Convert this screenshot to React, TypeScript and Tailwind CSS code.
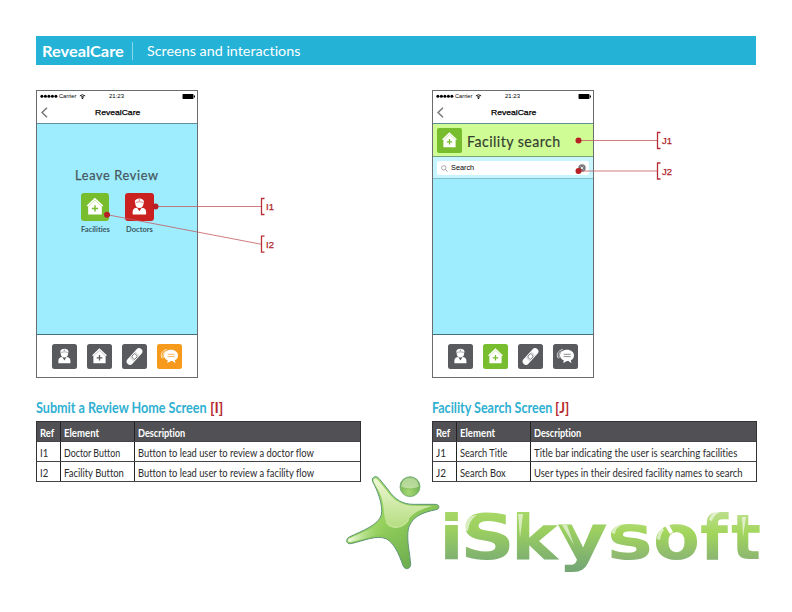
import React, { useLayoutEffect, useRef, useState } from "react";
import type { ReactNode } from "react";

const LATO = "font-[Lato,'Open_Sans',sans-serif] [font-variant-ligatures:none]";
const HELV = "font-['Liberation_Sans',Arial,sans-serif]";

/* A single line of text condensed or expanded to a given width. */
function Fit({ w, className = "", children }: { w: number; className?: string; children: ReactNode }) {
  const ref = useRef<HTMLSpanElement>(null);
  const [scale, setScale] = useState(1);
  useLayoutEffect(() => {
    if (ref.current) setScale(w / ref.current.offsetWidth);
  }, [w]);
  return (
    <span className={`block whitespace-nowrap ${className}`} style={{ width: w }}>
      <span ref={ref} className="inline-block origin-left" style={{ transform: `scaleX(${scale})` }}>
        {children}
      </span>
    </span>
  );
}

type IconName = "doctor" | "house" | "bandage" | "chat";

function Glyph({ name }: { name: IconName }) {
  return (
    <svg viewBox="0 0 25 25" className="h-full w-full" fill="white">
      {name === "doctor" && (
        <g>
          <path d="M8.300 7.600c0-1.600 1.800-2.800 4.100-2.800s4.100 1.200 4.100 2.800l-.4 1.800c0 2.400-1.600 4.100-3.700 4.100S8.700 11.800 8.700 9.400z" />
          <path d="M6.400 19.300v-2.500c0-2.400 1.700-3.700 3.900-3.700l2.100 3.300 2.100-3.300c2.200 0 3.900 1.300 3.900 3.700v2.500z" />
          <path d="M9 8.400q3.400-1.200 6.800 0" fill="none" stroke="currentColor" strokeWidth=".5" />
          <path d="M12.400 5.600v1.400M11.700 6.300h1.400" fill="none" stroke="currentColor" strokeWidth=".4" />
        </g>
      )}
      {name === "house" && (
        <g>
          <path d="M12.400 4.300 19.900 11.200l-.9.9-.4-.3v7.500H6.400v-7.500l-.4.300-.9-.9z" />
          <path d="M6.600 11.800 12.500 6.400l5.900 5.400" fill="none" stroke="currentColor" strokeWidth=".35" />
          <path d="M12.500 11v5.600M9.700 13.800h5.600" fill="none" stroke="currentColor" strokeWidth="1.300" />
        </g>
      )}
      {name === "bandage" && (
        <g transform="rotate(-48 12.500 12.500)">
          <rect x="2.400" y="9.200" width="20.200" height="6.600" rx="3.300" />
          <rect x="10.100" y="10.400" width="4.800" height="4.200" rx="1.200" fill="none" stroke="currentColor" strokeWidth=".8" />
          <path d="M8.700 9.200v6.600M16.300 9.200v6.600" stroke="currentColor" strokeWidth=".3" />
        </g>
      )}
      {name === "chat" && (
        <g>
          <path d="M10 5.500C5 5.800 3 11 5.200 14.400M9 6.800C6.300 8 5.400 11.500 6.300 14" fill="none" stroke="white" strokeWidth=".7" />
          <path d="M14 5.800c4.100 0 7 2.500 7 5.700 0 2.300-1.200 3.900-3.200 4.800l.7 2.900-3-2.200H14l-3.700 2.100.4-2.900C8.300 15.300 7 13.600 7 11.500c0-3.200 2.900-5.700 7-5.700z" />
          <path d="M10.600 10.300h7M10.600 12.600h7" fill="none" stroke="currentColor" strokeWidth=".7" />
        </g>
      )}
    </svg>
  );
}

function StatusBar() {
  return (
    <div className={`flex h-[10px] items-center pl-[3px] pr-[2px] text-[6px] leading-[10px] text-black ${HELV}`}>
      <svg viewBox="0 0 18 4" className="h-[4px] w-[18px]">
        {[1.900, 5.400, 8.900, 12.400, 15.900].map((x) => (
          <circle key={x} cx={x} cy="2.200" r="1.500" />
        ))}
      </svg>
      <Fit w={17} className="ml-px">Carrier</Fit>
      <svg viewBox="0 0 8 6" className="ml-[3px] h-[5px] w-[7px]" fill="none" stroke="black">
        <path d="M.8 2.300Q4-.5 7.200 2.300M2.200 3.800q1.800-1.600 3.600 0" strokeWidth="1.100" />
        <circle cx="4" cy="5" r=".6" fill="black" />
      </svg>
      <Fit w={15} className="ml-[23px]">21:23</Fit>
      <svg viewBox="0 0 13 5" className="ml-auto h-[5px] w-[13px]">
        <rect x=".5" width="11" height="5" rx=".7" />
        <rect x="12" y="1.500" width="1" height="2" />
      </svg>
    </div>
  );
}

function Phone({ active, color, children }: { active: IconName; color: string; children: ReactNode }) {
  const names: IconName[] = ["doctor", "house", "bandage", "chat"];
  return (
    <div className="flex h-[288px] w-[162px] flex-col border border-[#6a6d70] bg-white">
      <StatusBar />
      <div className={`flex h-[23px] items-center border-b border-[#5d8f9b] pl-[4px] text-[8px] leading-[24px] text-black ${HELV}`}>
        <svg viewBox="0 0 7 11" className="h-[11px] w-[7px]" fill="none" stroke="#777" strokeWidth="1.500">
          <path d="M6 .7 1 5.500 6 10.300" />
        </svg>
        <Fit w={45} className="ml-[47px] mt-px [-webkit-text-stroke:0.25px_black]">RevealCare</Fit>
      </div>
      <div className="flex flex-1 flex-col border-b border-[#44717c] bg-[#9eedff]">{children}</div>
      <div className="flex h-[42px] gap-[10px] pl-[15px] pt-[9px]">
        {names.map((n) => (
          <div key={n} className={`h-[25px] w-[25px] rounded-[2.500px] ${n === active ? color : "bg-[#595a5e] text-[#595a5e]"}`}>
            <Glyph name={n} />
          </div>
        ))}
      </div>
    </div>
  );
}

interface Call { dot: [number, number]; at: [number, number]; label: string }

function Callouts({ items }: { items: Call[] }) {
  return (
    <svg viewBox="0 0 270 287" className="absolute left-0 top-0 h-[287px] w-[270px]">
      {items.map(({ dot, at, label }) => (
        <g key={label}>
          <path d={`M${dot[0]} ${dot[1]}L${at[0]} ${at[1]}`} stroke="#c45a5e" strokeWidth=".8" />
          <circle cx={dot[0]} cy={dot[1]} r="3" fill="#b81f24" />
          <path d={`M${at[0] + 3.500} ${at[1] - 8}h-3v16h3`} fill="none" stroke="#b63035" strokeWidth="1.300" />
          <text x={at[0] + 5} y={at[1] + 3.700} fill="#b02328" stroke="#b02328" strokeWidth=".25" fontSize="9.500" fontFamily="Liberation Sans, Arial, sans-serif">
            {label}
          </text>
        </g>
      ))}
    </svg>
  );
}

type Cell = [string, number];

function Cells({ row, head }: { row: [Cell, Cell, Cell]; head?: boolean }) {
  const style = head ? "h-[20px] bg-[#515155] text-[11.500px] font-bold leading-[22px] text-white" : "h-[20px] text-[12px] leading-[22px] text-[#2b2b2d]";
  return (
    <div className={`grid grid-cols-[23px_74px_1fr] border-b border-[#444448] ${style}`}>
      {row.map(([text, w], i) => (
        <div key={text} className={`h-[19px] border-[#222] ${i ? "border-l pl-[3px]" : "pl-[3px]"}`}>
          <Fit w={w}>{text}</Fit>
        </div>
      ))}
    </div>
  );
}

function Section({ title, tw, tag, tagw, rows }: { title: string; tw: number; tag: string; tagw: number; rows: [Cell, Cell, Cell][] }) {
  return (
    <div className={LATO}>
      <h2 className="mt-[20px] flex h-[23px] gap-[3px] text-[14.500px] font-bold leading-[20px]">
        <Fit w={tw} className="text-[#2fb0d2]">{title}</Fit>
        <Fit w={tagw} className="text-[#b52a2d]">{tag}</Fit>
      </h2>
      <div className="w-[325px] border border-b-0 border-[#333]">
        <Cells head row={[["Ref", 14], ["Element", 35], ["Description", 47]]} />
        {rows.map((r) => (
          <Cells key={r[0][0]} row={r} />
        ))}
      </div>
    </div>
  );
}

function Logo() {
  const letters: [string, number, number][] = [
    ["i", 439, 25], ["S", 460, 55], ["k", 511, 47], ["y", 557, 51],
    ["s", 607, 46], ["o", 653, 47], ["f", 700, 28], ["t", 731, 30],
  ];
  return (
    <svg viewBox="340 465 430 115" className="absolute left-[340px] top-[465px] h-[115px] w-[430px]">
      <defs>
        <linearGradient id="word" gradientUnits="userSpaceOnUse" x1="0" x2="0" y1="510" y2="568">
          <stop offset="0" stopColor="#a9d866" />
          <stop offset=".35" stopColor="#9bcf60" />
          <stop offset="1" stopColor="#76a875" />
        </linearGradient>
        <linearGradient id="soft" gradientUnits="userSpaceOnUse" x1="0" x2="0" y1="510" y2="560">
          <stop offset="0" stopColor="#bfe093" />
          <stop offset=".45" stopColor="#a3d65b" />
          <stop offset="1" stopColor="#8bb573" />
        </linearGradient>
        <linearGradient id="body" x1="0" y1="0" x2=".7" y2="1">
          <stop offset="0" stopColor="#a4dc74" />
          <stop offset=".5" stopColor="#96d25c" />
          <stop offset="1" stopColor="#6cab4e" />
        </linearGradient>
        <linearGradient id="shine" x1="0" y1="0" x2="0" y2="1">
          <stop offset="0" stopColor="#eff8d5" />
          <stop offset="1" stopColor="#b4dd80" />
        </linearGradient>
        <linearGradient id="arm" x1="0" y1="0" x2="1" y2="0">
          <stop offset="0" stopColor="#f5fbe9" />
          <stop offset=".9" stopColor="#96d25c" stopOpacity="0" />
        </linearGradient>
        <radialGradient id="head" cx=".45" cy=".8" r=".75">
          <stop offset="0" stopColor="#a5d874" />
          <stop offset="1" stopColor="#66a94a" />
        </radialGradient>
      </defs>
      <g transform="translate(340 465) scale(.33333)">
        <path d="M97 42C103 30 114 35 120 44L145 75C165 105 190 118 220 118L285 118C300 118 300 132 288 134C250 142 220 152 207 185C200 205 204 240 209 270L212 298C212 312 196 316 190 304C175 262 162 235 140 222C110 208 70 228 32 236C18 238 16 222 28 216C70 196 115 180 124 150C130 120 112 75 98 50Z" fill="url(#body)" stroke="#5e9678" strokeWidth="3" />
        <path d="M26 221C70 202 112 188 126 160L150 200C112 208 70 224 30 231C24 231 22 225 26 221Z" fill="url(#arm)" />
        <path d="M101 43C106 37 112 43 118 50L143 81C163 109 190 122 220 122L278 123C250 130 222 140 206 163C190 190 155 196 138 170C129 150 134 124 124 96C118 78 105 60 101 49Z" fill="url(#shine)" />
        <path d="M206 163C190 190 155 196 138 170" fill="none" stroke="#c6e79a" strokeWidth="4" />
        <circle cx="210" cy="65" r="30" fill="url(#head)" stroke="#65a06b" strokeWidth="2" />
        <path d="M184 65C184 28 236 28 236 65Q210 74 184 65Z" fill="#d5ebbd" opacity=".65" />
      </g>
      <text y="559" fontFamily="DejaVu Sans, sans-serif" fontWeight="700" fontSize="63">
        {letters.map(([c, x, w], i) => (
          <tspan key={i} x={x} textLength={w} lengthAdjust="spacingAndGlyphs" fill={i < 4 ? "url(#word)" : "url(#soft)"}>{c}</tspan>
        ))}
      </text>
      <path d="M666 519L673 532L670 534L662 521Z" fill="white" />
      <g fill="white" opacity=".6">
        <path d="M465 530Q464 516 477 515Q469 520 468 531Z" />
        <path d="M518 514h5L520 538z" />
        <path d="M562 525h5L574 545z" />
        <path d="M612 533Q612 525 622 525Q615 528 615 534Z" />
        <path d="M657 539Q658 530 662 527L664 530Q661 533 660 540Z" />
        <path d="M709 520Q711 511 722 511Q714 514 712 521Z" />
        <path d="M742 517h4L743 537z" />
      </g>
    </svg>
  );
}

export default function App() {
  return (
    <div className="relative h-[612px] w-[792px] overflow-hidden bg-white pl-[36px] pt-[36px]">
      <header className={`flex h-[29px] w-[720px] items-center bg-[#24b2d7] pl-[6px] leading-[29px] text-white ${LATO}`}>
        <Fit w={82} className="mt-px text-[15px] font-bold">RevealCare</Fit>
        <div className="ml-[8px] h-[18px] w-px bg-[#8bd7e9]" />
        <Fit w={153} className="ml-[14px] mt-[2px] text-[13.500px]">Screens and interactions</Fit>
      </header>
      <main className="grid grid-cols-[396px_360px] pt-[26px]">
        <section>
          <div className="relative -mt-px h-[288px]">
            <Phone active="chat" color="bg-[#f79a1b] text-[#f79a1b]">
              <Fit w={84} className={`ml-[38px] mt-[41px] text-[13.500px] leading-[20px] tracking-[0.7px] text-[#46565c] [-webkit-text-stroke:0.25px_#46565c] [font-weight:400] ${LATO}`}>Leave Review</Fit>
              <div className={`ml-[44px] mt-[8px] flex gap-[16px] text-[7px] font-bold leading-[9px] text-[#3c5b64] ${LATO}`}>
                <div>
                  <div className="mb-[4px] h-[28px] w-[28px] rounded-[3px] bg-[#77bd2e] text-[#77bd2e]"><Glyph name="house" /></div>
                  <Fit w={29}>Facilities</Fit>
                </div>
                <div className="-ml-px">
                  <div className="mb-[4px] h-[28px] w-[29px] rounded-[3px] bg-[#cb2020] text-[#cb2020]"><Glyph name="doctor" /></div>
                  <Fit w={27} className="ml-px">Doctors</Fit>
                </div>
              </div>
            </Phone>
            <Callouts items={[
              { dot: [119.500, 116.500], at: [225, 116.500], label: "I1" },
              { dot: [71, 124.700], at: [225, 154.200], label: "I2" },
            ]} />
          </div>
          <Section title="Submit a Review Home Screen" tw={171} tag="[I]" tagw={13} rows={[
            [["I1", 8], ["Doctor Button", 56], ["Button to lead user to review a doctor flow", 176]],
            [["I2", 8], ["Facility Button", 60], ["Button to lead user to review a facility flow", 176]],
          ]} />
        </section>
        <section>
          <div className="relative -mt-px h-[288px]">
            <Phone active="house" color="bg-[#77bd2e] text-[#77bd2e]">
              <div className={`flex h-[33px] items-center border-b border-[#78a579] bg-[#d0fc96] pl-[4px] text-[16px] tracking-[0.5px] text-[#34402f] ${LATO}`}>
                <div className="h-[25px] w-[25px] rounded-[2px] bg-[#77bd2e] text-[#77bd2e]"><Glyph name="house" /></div>
                <Fit w={94} className="ml-[5px] mt-px [-webkit-text-stroke:0.2px_#34402f]">Facility search</Fit>
              </div>
              <div className="h-[22px] border-b border-[#83bdc9] bg-[#c7f5ff] px-[4px] pt-[4px]">
                <div className={`flex h-[14px] items-center rounded-[2px] bg-white pl-[4px] pr-[3px] text-[7px] text-black ${HELV}`}>
                  <svg viewBox="0 0 7 7" className="h-[7px] w-[7px]" fill="none" stroke="#888" strokeWidth=".7">
                    <circle cx="2.800" cy="2.800" r="2.200" /><path d="M4.400 4.400 6.600 6.600" />
                  </svg>
                  <Fit w={23} className="ml-[3px]">Search</Fit>
                  <svg viewBox="0 0 8 8" className="ml-auto h-[8px] w-[8px]">
                    <circle cx="4" cy="4" r="3.700" fill="#77777c" /><path d="M2.600 2.600 5.400 5.400M5.400 2.600 2.600 5.400" stroke="white" strokeWidth=".8" />
                  </svg>
                </div>
              </div>
            </Phone>
            <Callouts items={[
              { dot: [146.500, 50.500], at: [225, 50.500], label: "J1" },
              { dot: [146.500, 81], at: [225, 81], label: "J2" },
            ]} />
          </div>
          <Section title="Facility Search Screen" tw={120} tag="[J]" tagw={14} rows={[
            [["J1", 10], ["Search Title", 47], ["Title bar indicating the user is searching facilities", 203]],
            [["J2", 10], ["Search Box", 46], ["User types in their desired facility names to search", 209]],
          ]} />
        </section>
      </main>
      <Logo />
    </div>
  );
}
